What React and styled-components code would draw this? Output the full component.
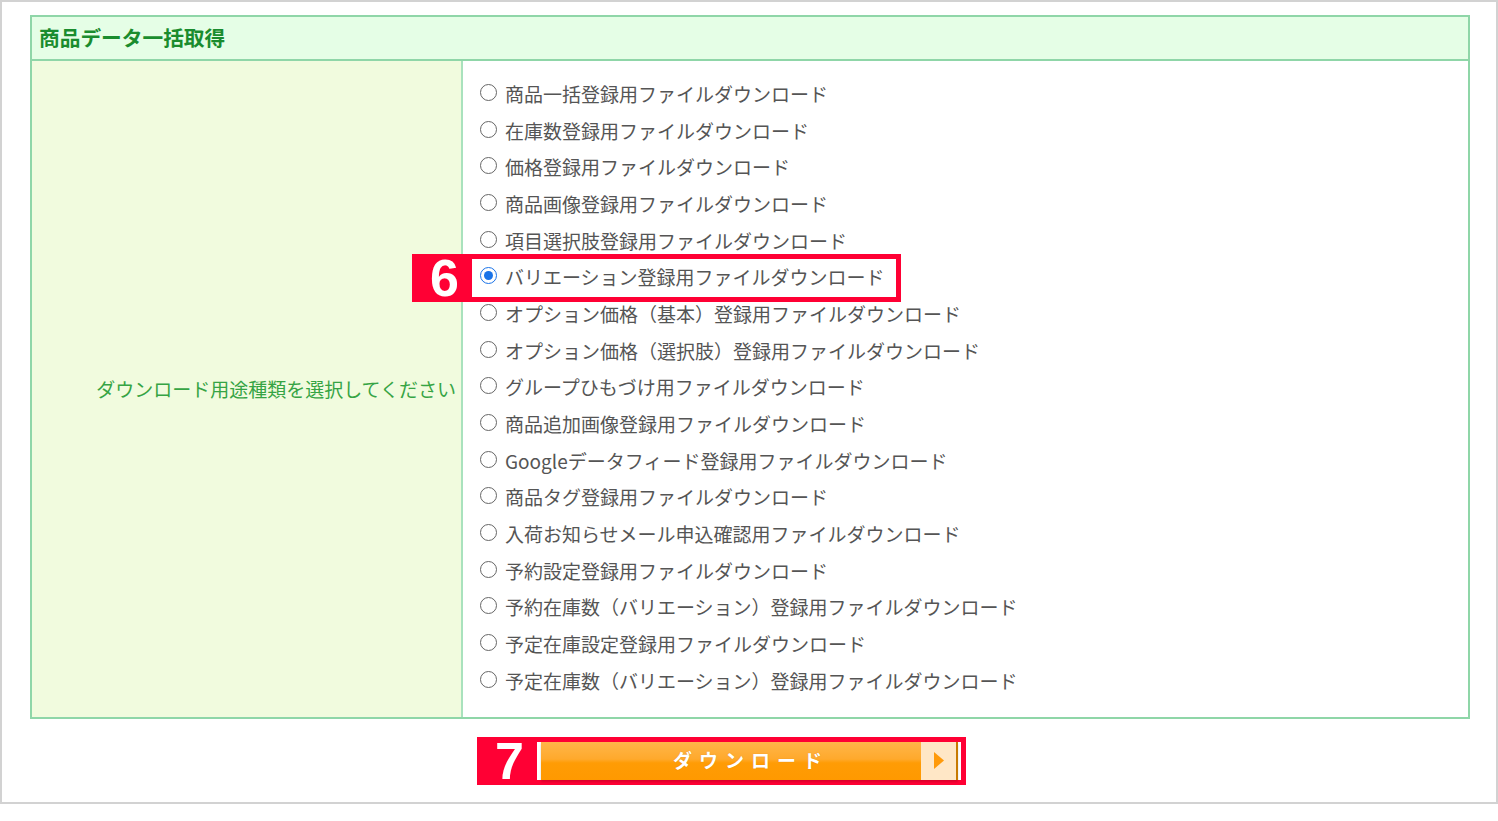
import React from "react";
import styled, { createGlobalStyle } from "styled-components";

const GlobalStyle = createGlobalStyle`
  html, body {
    margin: 0;
    padding: 0;
    background: #fff;
  }
  body {
    font-family: "Noto Sans CJK JP", "Noto Sans", sans-serif;
  }
`;

const Frame = styled.div`
  width: 1498px;
  height: 804px;
  box-sizing: border-box;
  border: 2px solid #d2d2d2;
  padding: 13px 0 0 28px;
  display: flex;
  flex-direction: column;
`;

const Table = styled.div`
  width: 1440px;
  display: flex;
  flex-direction: column;
`;

const Header = styled.div`
  height: 46px;
  box-sizing: border-box;
  border: 2px solid #8fd6a8;
  background: #e5fee6;
  display: flex;
  align-items: center;
  padding: 0 0 3px 7px;
  font-size: 20.7px;
  font-weight: bold;
  color: #1a8c2e;
`;

const Body = styled.div`
  display: grid;
  grid-template-columns: 431px 1fr;
  border: 2px solid #8fd6a8;
  border-top: none;
`;

const LabelCell = styled.div`
  background: #f1fbde;
  border-right: 2px solid #a9e2bd;
  display: flex;
  align-items: center;
  justify-content: flex-end;
  padding-right: 5px;
  font-size: 19px;
  color: #36a444;
`;

const List = styled.div`
  padding: 14px 0 18px 17px;
  display: flex;
  flex-direction: column;
`;

const Option = styled.label`
  position: relative;
  height: 36.7px;
  display: flex;
  align-items: center;
  gap: 8px;
  font-size: 19px;
  color: #555;
  white-space: nowrap;
`;

const Radio = styled.span`
  width: 17px;
  height: 17px;
  box-sizing: border-box;
  border-radius: 50%;
  border: 1.5px solid ${(p) => (p.$checked ? "#1a73e8" : "#666")};
  display: flex;
  align-items: center;
  justify-content: center;
  flex-shrink: 0;
  margin-top: -2px;
  &::after {
    content: "";
    width: 9px;
    height: 9px;
    border-radius: 50%;
    background: ${(p) => (p.$checked ? "#1a73e8" : "transparent")};
  }
`;

const Mark = styled.div`
  position: ${(p) => (p.$overlay ? "absolute" : "relative")};
  left: ${(p) => (p.$overlay ? "-68px" : "auto")};
  top: ${(p) => (p.$overlay ? "-4px" : "auto")};
  width: 489px;
  height: 48px;
  box-sizing: border-box;
  border: 5px solid #ff0034;
  display: flex;
  pointer-events: none;
`;

const MarkNum = styled.div`
  width: 55px;
  margin: -5px 0 -5px -5px;
  padding-left: 5px;
  background: #ff0034;
  color: #fff;
  font-family: "Liberation Sans", Arial, sans-serif;
  font-weight: bold;
  font-size: 52px;
  line-height: 48px;
  text-align: center;
`;

const ButtonRow = styled.div`
  margin-top: 18px;
  padding-left: 447px;
  display: flex;
`;

const DownloadButton = styled.button`
  margin-left: 4px;
  width: 417px;
  height: 100%;
  border: none;
  border-right: 2px solid #c77a00;
  padding: 0;
  display: flex;
  background: linear-gradient(#ffb649 0%, #ffa92c 45%, #ff9c05 55%, #ff9900 100%);
  box-shadow: 0 2px 2px rgba(0, 0, 0, 0.15);
  cursor: pointer;
`;

const ButtonText = styled.span`
  flex: 1;
  display: flex;
  align-items: center;
  justify-content: center;
  padding: 0 0 3px 40px;
  color: #fff;
  font-family: "Noto Sans CJK JP", sans-serif;
  font-weight: bold;
  font-size: 19px;
  letter-spacing: 7px;
  text-shadow: 0 0 1px rgba(150, 80, 0, 0.4);
`;

const ArrowBox = styled.span`
  width: 35px;
  background: #ffe7c6;
  display: flex;
  align-items: center;
  justify-content: center;
`;

const options = [
  "商品一括登録用ファイルダウンロード",
  "在庫数登録用ファイルダウンロード",
  "価格登録用ファイルダウンロード",
  "商品画像登録用ファイルダウンロード",
  "項目選択肢登録用ファイルダウンロード",
  "バリエーション登録用ファイルダウンロード",
  "オプション価格（基本）登録用ファイルダウンロード",
  "オプション価格（選択肢）登録用ファイルダウンロード",
  "グループひもづけ用ファイルダウンロード",
  "商品追加画像登録用ファイルダウンロード",
  "Googleデータフィード登録用ファイルダウンロード",
  "商品タグ登録用ファイルダウンロード",
  "入荷お知らせメール申込確認用ファイルダウンロード",
  "予約設定登録用ファイルダウンロード",
  "予約在庫数（バリエーション）登録用ファイルダウンロード",
  "予定在庫設定登録用ファイルダウンロード",
  "予定在庫数（バリエーション）登録用ファイルダウンロード",
];

export default function App() {
  const selected = 5;
  return (
    <>
      <GlobalStyle />
      <Frame>
        <Table>
          <Header>商品データ一括取得</Header>
          <Body>
            <LabelCell>ダウンロード用途種類を選択してください</LabelCell>
            <List>
              {options.map((text, i) => (
                <Option key={text}>
                  <Radio $checked={i === selected} />
                  {text}
                  {i === selected && (
                    <Mark $overlay>
                      <MarkNum>6</MarkNum>
                    </Mark>
                  )}
                </Option>
              ))}
            </List>
          </Body>
        </Table>
        <ButtonRow>
          <Mark>
            <MarkNum>7</MarkNum>
            <DownloadButton>
              <ButtonText>ダウンロード</ButtonText>
              <ArrowBox>
                <svg width="11" height="17" viewBox="0 0 11 17">
                  <path d="M1 0 L11 8.5 L1 17 Z" fill="#ff9a0a" />
                </svg>
              </ArrowBox>
            </DownloadButton>
          </Mark>
        </ButtonRow>
      </Frame>
    </>
  );
}
